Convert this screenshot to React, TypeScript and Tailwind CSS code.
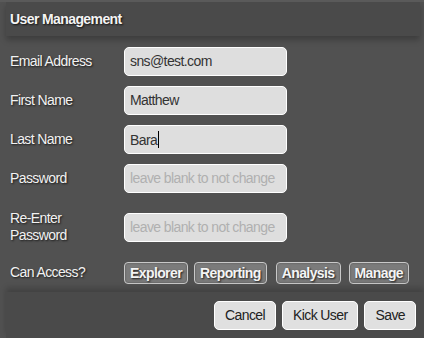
import React from "react";

const font = { fontFamily: '"Liberation Sans", Arial, sans-serif' };

const labelCls =
  "w-[118px] pl-[4px] text-[14px] leading-[17px] tracking-[-0.6px] text-[#f2f2f2] [text-shadow:1px_1px_2px_rgba(0,0,0,0.7)] whitespace-pre-line";

function Field({ label, value, placeholder, caret }: { label: string; value?: string; placeholder?: string; caret?: boolean }) {
  return (
    <div className="flex items-center">
      <div className={labelCls}>{label}</div>
      <div className="flex h-[29px] w-[163px] items-center rounded-[5px] border border-white bg-[#dedede] px-[5px] text-[14px] tracking-[-0.6px]">
        {value ? (
          <span className="text-[#333]">
            {value}
            {caret && <span className="ml-[1px] inline-block h-[17px] w-px translate-y-[3px] bg-black" />}
          </span>
        ) : (
          <span className="text-[#b0b0b0]">{placeholder}</span>
        )}
      </div>
    </div>
  );
}

function Tag({ children }: { children: React.ReactNode }) {
  return (
    <span className="rounded-[4px] border border-[#c8c8c8] bg-[#7b7b7b] px-[5px] py-[2px] text-[14px] font-bold leading-[16px] tracking-[-0.6px] text-[#f4f4f4] [text-shadow:1px_1px_2px_rgba(0,0,0,0.8)] shadow-[inset_0_0_2px_rgba(0,0,0,0.4)]">
      {children}
    </span>
  );
}

function Btn({ children }: { children: React.ReactNode }) {
  return (
    <button type="button" className="h-[29px] rounded-[5px] border border-white bg-[#e0e0e0] px-[10px] text-[14px] tracking-[-0.6px] text-[#222]">
      {children}
    </button>
  );
}

export default function App() {
  return (
    <div style={font} className="flex h-[338px] w-[424px] flex-col overflow-hidden border-t-2 border-[#5a5a5a] bg-[#515151]">
      <div className="relative z-10 ml-[6px] mr-[4px] flex h-[34px] items-center bg-[#4a4a4a] pl-[4px] shadow-[0_4px_6px_rgba(0,0,0,0.25)]">
        <span className="text-[14px] font-bold tracking-[-0.6px] text-[#f4f4f4] [text-shadow:1px_1px_2px_rgba(0,0,0,0.8)]">User Management</span>
      </div>
      <div className="flex flex-1 flex-col pl-[6px] pt-[11px]">
        <div className="flex flex-col gap-[10px]">
          <Field label="Email Address" value="sns@test.com" />
          <Field label="First Name" value="Matthew" />
          <Field label="Last Name" value="Bara" caret />
          <Field label="Password" placeholder="leave blank to not change" />
        </div>
        <div className="mt-[17px]">
          <Field label={"Re-Enter\nPassword"} placeholder="leave blank to not change" />
        </div>
        <div className="mt-[18px] flex items-center">
          <div className={`${labelCls} -translate-y-[1px]`}>Can Access?</div>
          <div className="flex gap-[6px] [&>*:nth-child(3)]:ml-[3px] [&>*:nth-child(4)]:ml-[2px]">
            <Tag>Explorer</Tag>
            <Tag>Reporting</Tag>
            <Tag>Analysis</Tag>
            <Tag>Manage</Tag>
          </div>
        </div>
      </div>
      <div className="ml-[6px] flex h-[46px] items-center justify-end gap-[6px] bg-[#4a4a4a] pr-[8px] shadow-[0_-4px_6px_rgba(0,0,0,0.2)]">
        <Btn>Cancel</Btn>
        <Btn>Kick User</Btn>
        <Btn>Save</Btn>
      </div>
    </div>
  );
}
